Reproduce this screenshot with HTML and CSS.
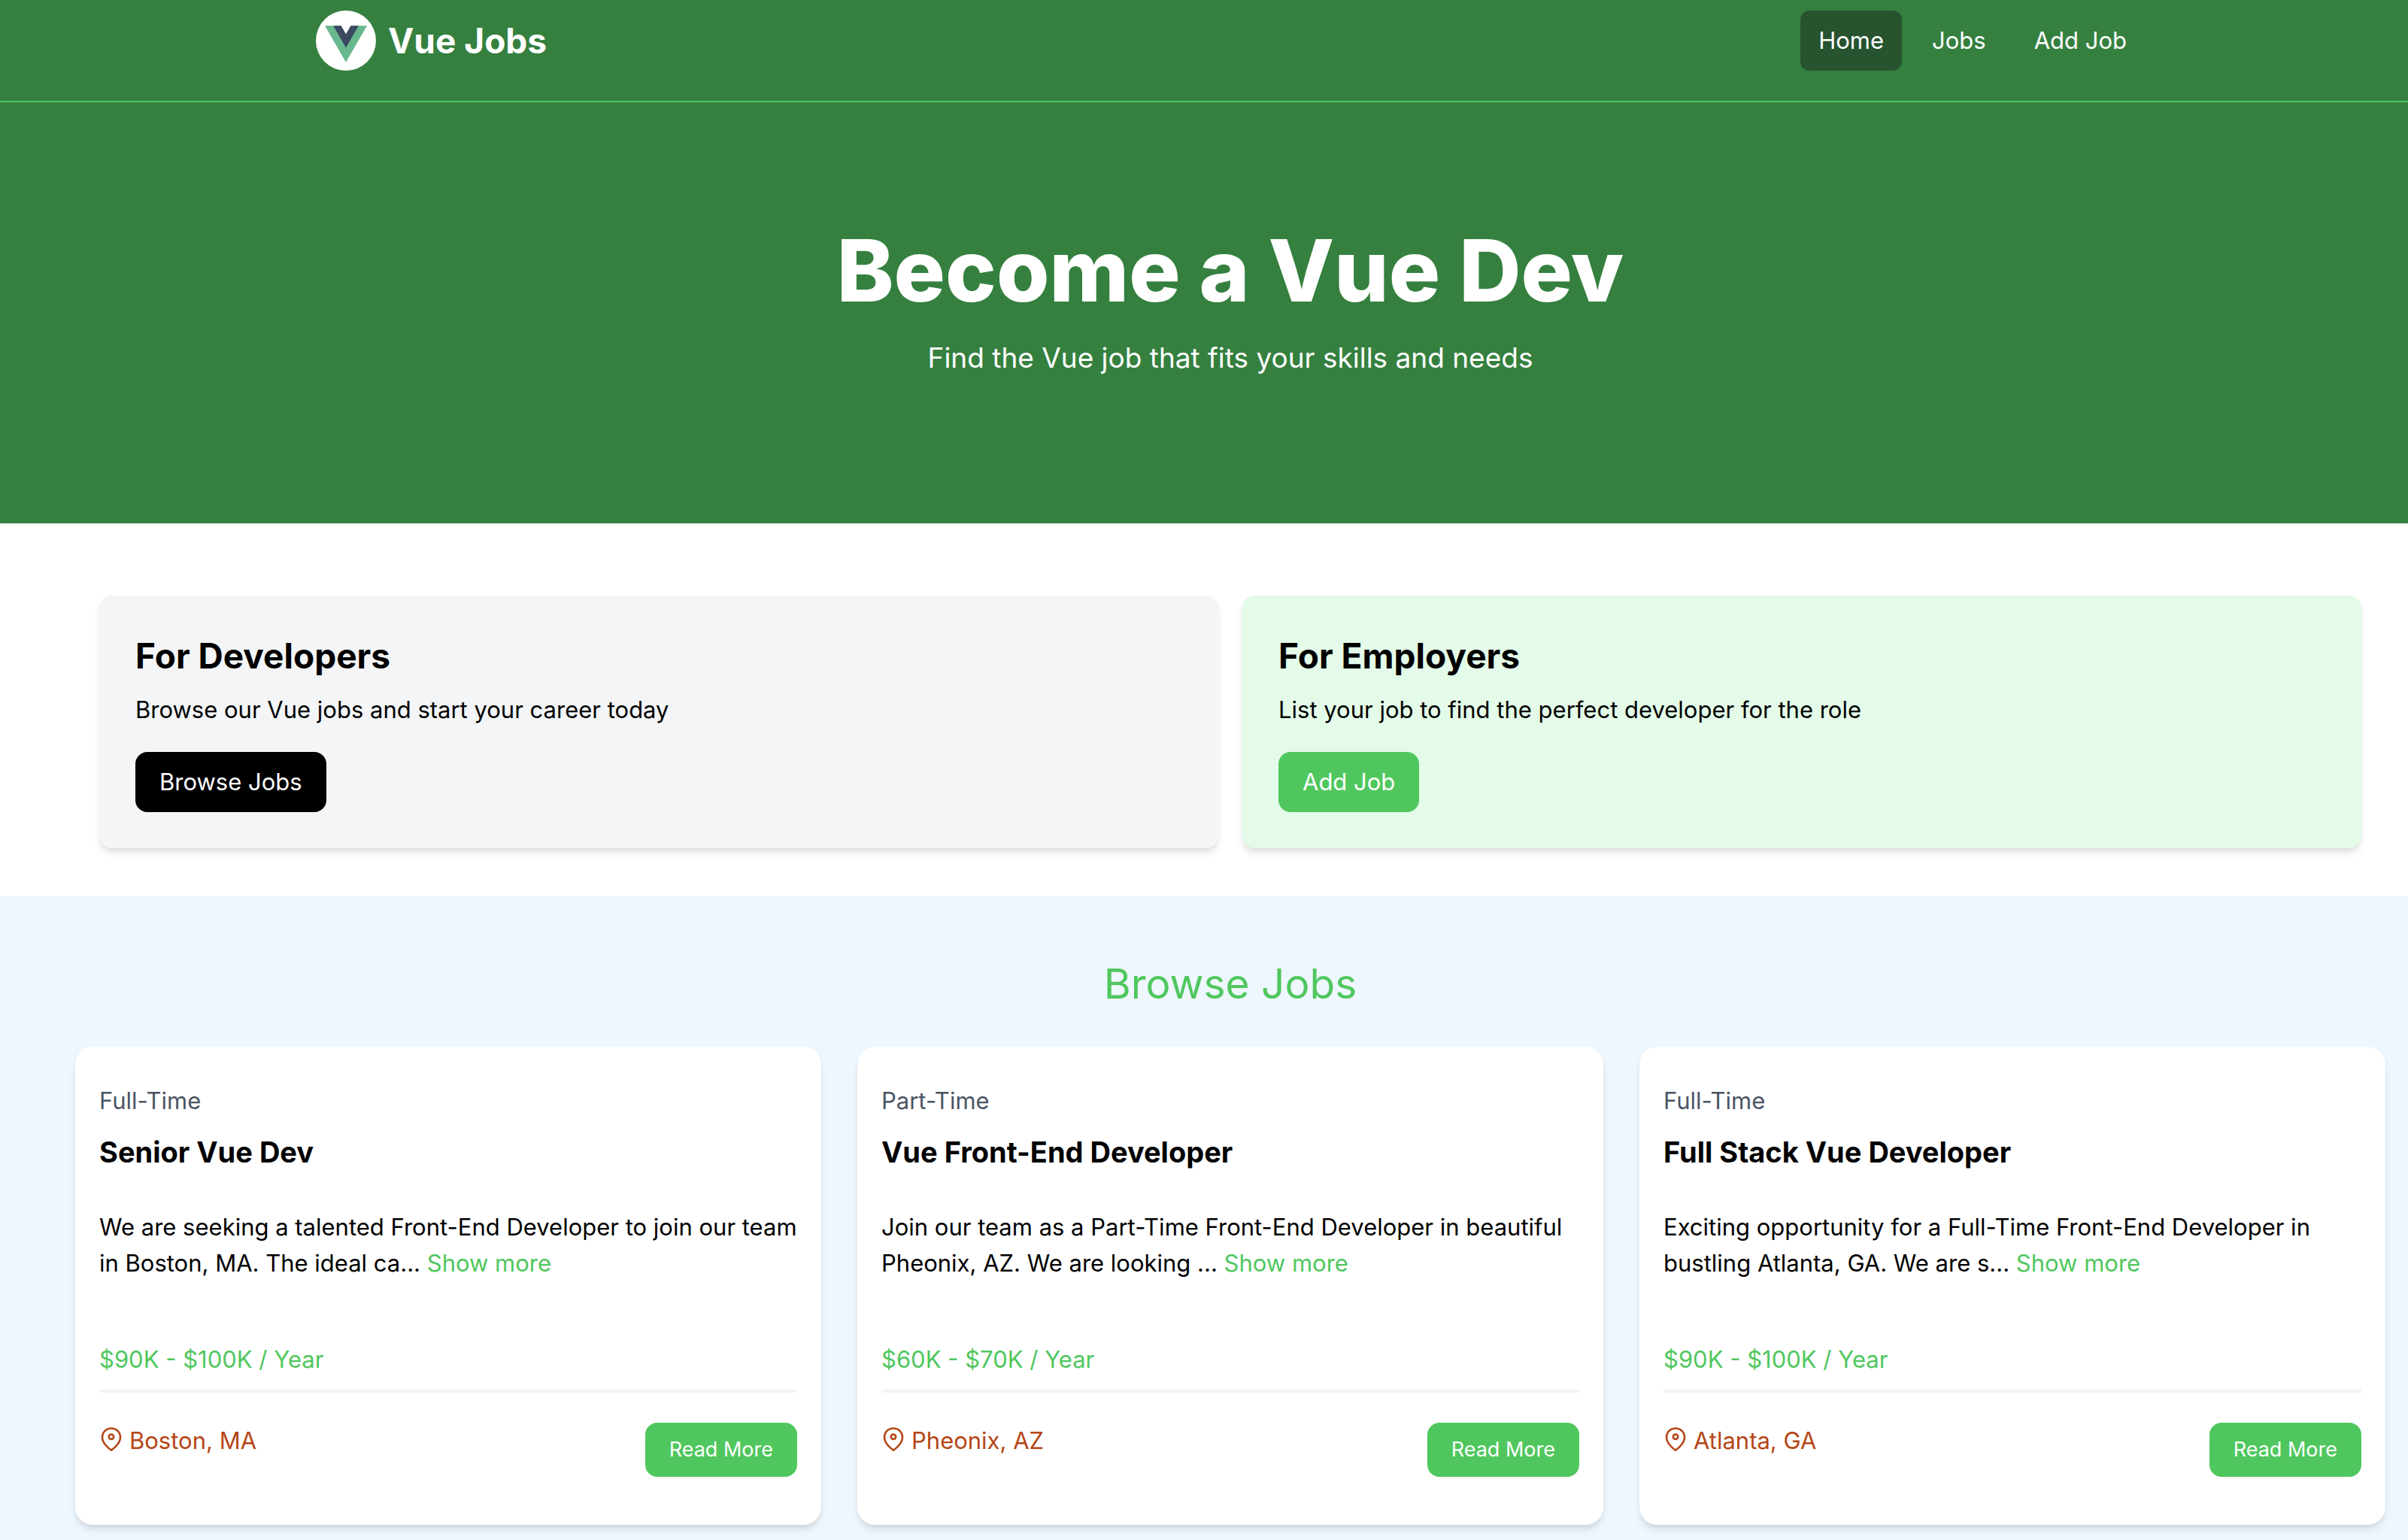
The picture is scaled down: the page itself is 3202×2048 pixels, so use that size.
FILE: index.html
```html
<!DOCTYPE html>
<html lang="en">
<head>
<meta charset="utf-8">
<meta name="viewport" content="width=device-width, initial-scale=1">
<title>Vue Jobs</title>
<link rel="stylesheet" href="styles.css">
</head>
<body>
<svg class="icon-defs" aria-hidden="true">
  <symbol id="pin" viewBox="0 0 32 36">
    <path d="M16 30.600C12 28 4 20.700 4 13.400C4 6.600 9.300 1.500 16 1.500S28 6.600 28 13.400C28 20.700 20 28 16 30.600Z" fill="none" stroke="currentColor" stroke-width="2.600" stroke-linejoin="round"/>
    <circle cx="16" cy="12.700" r="3.200" fill="none" stroke="currentColor" stroke-width="2.600"/>
  </symbol>
</svg>

<header class="navbar">
  <div class="navbar-inner">
    <a class="brand" href="#">
      <svg class="brand-logo" viewBox="0 0 80 80" aria-hidden="true">
        <circle cx="40" cy="40" r="40" fill="#fff"/>
        <g transform="translate(12 20.300) scale(.214)">
          <path fill="#68b88e" d="M161.096 0l-30.225 52.351L100.647 0H0l130.872 226.688L261.749 0z"/>
          <path fill="#3b4a5f" d="M161.096 0l-30.225 52.351L100.647 0H52.346l78.526 136.010L209.398 0z"/>
        </g>
      </svg>
      <span class="brand-name">Vue Jobs</span>
    </a>
    <nav class="nav-links">
      <a class="nav-link active" href="#">Home</a>
      <a class="nav-link" href="#jobs">Jobs</a>
      <a class="nav-link" href="#add">Add Job</a>
    </nav>
  </div>
</header>

<main>
  <section class="hero">
    <h1 class="hero-title">Become a Vue Dev</h1>
    <p class="hero-text">Find the Vue job that fits your skills and needs</p>
  </section>

  <section class="promos">
    <article class="promo">
      <h2 class="promo-title">For Developers</h2>
      <p class="promo-text">Browse our Vue jobs and start your career today</p>
      <a class="btn btn-dark" href="#jobs">Browse Jobs</a>
    </article>
    <article class="promo promo-green">
      <h2 class="promo-title">For Employers</h2>
      <p class="promo-text">List your job to find the perfect developer for the role</p>
      <a class="btn" href="#add">Add Job</a>
    </article>
  </section>

  <section class="jobs" id="jobs">
    <h2 class="jobs-title">Browse Jobs</h2>
    <div class="job-grid">
      <article class="job">
        <p class="job-type">Full-Time</p>
        <h3 class="job-title">Senior Vue Dev</h3>
        <p class="job-text">We are seeking a talented Front-End Developer to join our team in Boston, MA. The ideal ca... <button class="more" type="button">Show more</button></p>
        <p class="job-salary">$90K - $100K / Year</p>
        <div class="job-footer">
          <p class="job-place"><svg class="pin" aria-hidden="true"><use href="#pin"/></svg>Boston, MA</p>
          <a class="btn btn-small" href="#job-1">Read More</a>
        </div>
      </article>
      <article class="job">
        <p class="job-type">Part-Time</p>
        <h3 class="job-title">Vue Front-End Developer</h3>
        <p class="job-text">Join our team as a Part-Time Front-End Developer in beautiful Pheonix, AZ. We are looking ... <button class="more" type="button">Show more</button></p>
        <p class="job-salary">$60K - $70K / Year</p>
        <div class="job-footer">
          <p class="job-place"><svg class="pin" aria-hidden="true"><use href="#pin"/></svg>Pheonix, AZ</p>
          <a class="btn btn-small" href="#job-2">Read More</a>
        </div>
      </article>
      <article class="job">
        <p class="job-type">Full-Time</p>
        <h3 class="job-title">Full Stack Vue Developer</h3>
        <p class="job-text">Exciting opportunity for a Full-Time Front-End Developer in bustling Atlanta, GA. We are s... <button class="more" type="button">Show more</button></p>
        <p class="job-salary">$90K - $100K / Year</p>
        <div class="job-footer">
          <p class="job-place"><svg class="pin" aria-hidden="true"><use href="#pin"/></svg>Atlanta, GA</p>
          <a class="btn btn-small" href="#job-3">Read More</a>
        </div>
      </article>
    </div>
  </section>
</main>
</body>
</html>
```
FILE: styles.css
```css
:root {
  --green: #50c75e;
  --green-dark: #35803f;
  --shadow: 0 8px 12px -2px rgba(0, 0, 0, .1), 0 4px 8px -4px rgba(0, 0, 0, .1);
}

* { box-sizing: border-box; }

body {
  margin: 0;
  font-family: Inter, "Liberation Sans", sans-serif;
  font-size: 31px;
  line-height: 48px;
  color: #000;
  background: #fff;
}

h1, h2, h3, p { margin: 0; }
a { color: inherit; text-decoration: none; }

.icon-defs { display: none; }

.navbar {
  padding: 14px 0 40px 70px;
  border-bottom: 2px solid var(--green);
  background: var(--green-dark);
  color: #fff;
}
.navbar-inner {
  display: flex;
  justify-content: space-between;
  max-width: 2560px;
  margin: 0 auto;
  padding: 0 64px;
}
.brand { display: flex; align-items: center; gap: 16px; }
.brand-logo { width: 80px; height: 80px; }
.brand-name { font-size: 46px; line-height: 64px; font-weight: 700; }
.nav-links { display: flex; gap: 16px; }
.nav-link { padding: 16px 24px; border-radius: 12px; }
.nav-link.active { background: #27532f; }

.hero {
  padding: 160px 0 192px 70px;
  background: var(--green-dark);
  color: #fff;
  text-align: center;
}
.hero-title { font-size: 114px; line-height: 128px; font-weight: 800; }
.hero-text { margin-top: 24px; font-size: 37px; line-height: 56px; }

.promos {
  display: grid;
  grid-template-columns: 1fr 1fr;
  gap: 32px;
  padding: 96px 62px 64px 132px;
}
.promo {
  padding: 48px;
  border-radius: 16px;
  background: #f3f5f7;
  box-shadow: var(--shadow);
}
.promo-green { background: #e3fbe8; }
.promo-title { font-size: 46px; line-height: 64px; font-weight: 700; }
.promo-text { margin: 16px 0 32px; }

.btn {
  display: block;
  width: max-content;
  padding: 16px 32px;
  border-radius: 16px;
  background: var(--green);
  color: #fff;
}
.btn-dark { background: #000; }
.btn-small { font-size: 27px; line-height: 40px; }

.jobs {
  padding: 80px 30px 20px 100px;
  background: #eef6fe;
}
.jobs-title {
  margin-bottom: 48px;
  font-size: 55px;
  line-height: 72px;
  font-weight: 400;
  text-align: center;
  color: var(--green);
}
.job-grid { display: grid; grid-template-columns: repeat(3, 1fr); gap: 48px; }
.job {
  padding: 48px 32px 64px;
  border-radius: 24px;
  background: #fff;
  box-shadow: var(--shadow);
}
.job-type { color: #4b5563; }
.job-title { margin: 16px 0 48px; font-size: 38px; line-height: 56px; font-weight: 700; }
.more {
  padding: 0;
  border: 0;
  background: none;
  font: inherit;
  line-height: 40px;
  color: var(--green);
}
.job-salary {
  margin-top: 80px;
  padding-bottom: 16px;
  border-bottom: 4px solid #f3f4f6;
  color: var(--green);
}
.job-footer {
  display: flex;
  justify-content: space-between;
  align-items: flex-start;
  margin-top: 40px;
}
.job-place { display: flex; align-items: center; gap: 8px; color: #b54616; }
.pin { width: 32px; height: 36px; }
```
